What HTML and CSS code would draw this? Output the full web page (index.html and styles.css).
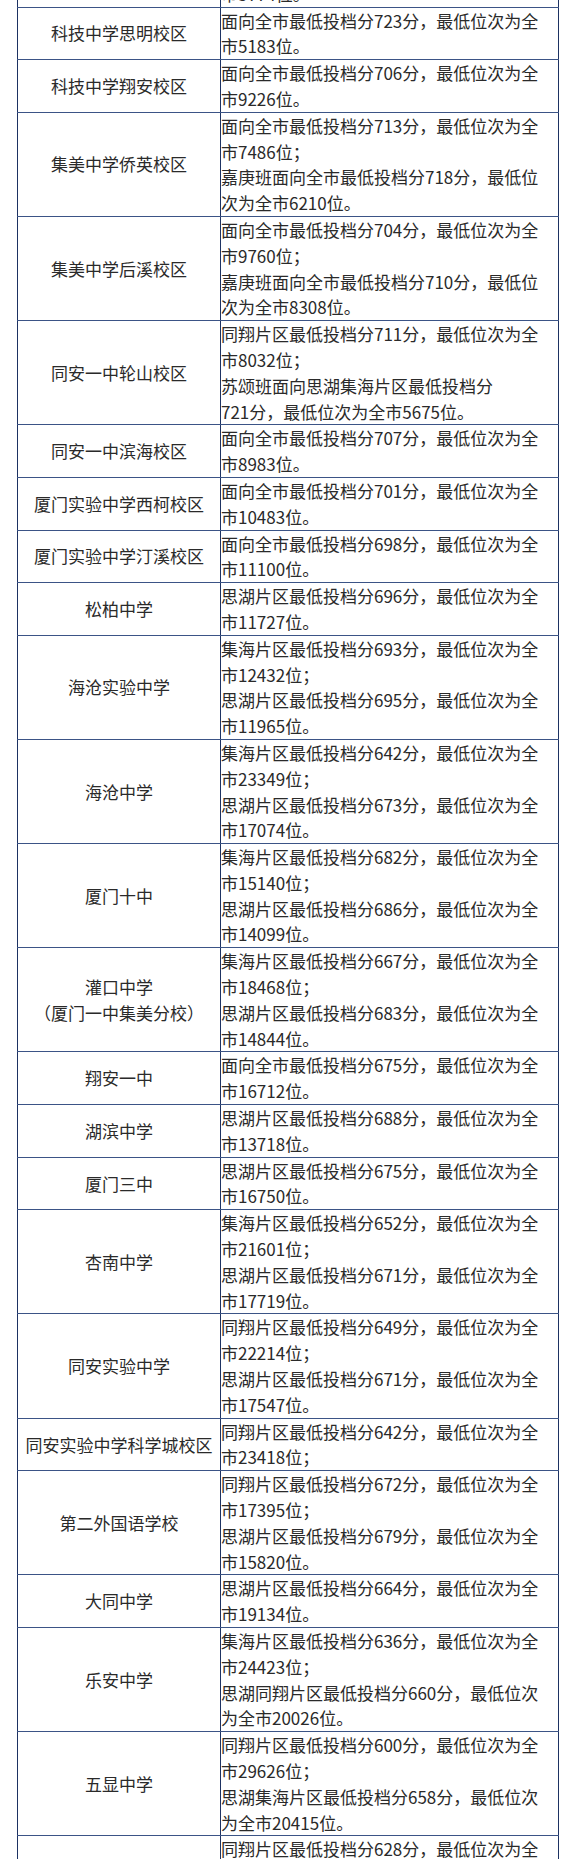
FILE: index.html
```html
<!DOCTYPE html>
<html lang="zh-CN">
<head>
<meta charset="utf-8">
<title>投档分数线</title>
<link rel="stylesheet" href="styles.css">
</head>
<body>
<div class="page">
<table class="score-table">
<colgroup><col class="col-school"><col class="col-info"></colgroup>
<tbody>
<tr><td class="school"></td><td class="info">面向全市最低投档分729分，最低位次为全<br>市3774位。</td></tr>
<tr><td class="school">科技中学思明校区</td><td class="info">面向全市最低投档分723分，最低位次为全<br>市5183位。</td></tr>
<tr><td class="school">科技中学翔安校区</td><td class="info">面向全市最低投档分706分，最低位次为全<br>市9226位。</td></tr>
<tr><td class="school">集美中学侨英校区</td><td class="info">面向全市最低投档分713分，最低位次为全<br>市7486位；<br>嘉庚班面向全市最低投档分718分，最低位<br>次为全市6210位。</td></tr>
<tr><td class="school">集美中学后溪校区</td><td class="info">面向全市最低投档分704分，最低位次为全<br>市9760位；<br>嘉庚班面向全市最低投档分710分，最低位<br>次为全市8308位。</td></tr>
<tr><td class="school">同安一中轮山校区</td><td class="info">同翔片区最低投档分711分，最低位次为全<br>市8032位；<br>苏颂班面向思湖集海片区最低投档分<br>721分，最低位次为全市5675位。</td></tr>
<tr><td class="school">同安一中滨海校区</td><td class="info">面向全市最低投档分707分，最低位次为全<br>市8983位。</td></tr>
<tr><td class="school">厦门实验中学西柯校区</td><td class="info">面向全市最低投档分701分，最低位次为全<br>市10483位。</td></tr>
<tr><td class="school">厦门实验中学汀溪校区</td><td class="info">面向全市最低投档分698分，最低位次为全<br>市11100位。</td></tr>
<tr><td class="school">松柏中学</td><td class="info">思湖片区最低投档分696分，最低位次为全<br>市11727位。</td></tr>
<tr><td class="school">海沧实验中学</td><td class="info">集海片区最低投档分693分，最低位次为全<br>市12432位；<br>思湖片区最低投档分695分，最低位次为全<br>市11965位。</td></tr>
<tr><td class="school">海沧中学</td><td class="info">集海片区最低投档分642分，最低位次为全<br>市23349位；<br>思湖片区最低投档分673分，最低位次为全<br>市17074位。</td></tr>
<tr><td class="school">厦门十中</td><td class="info">集海片区最低投档分682分，最低位次为全<br>市15140位；<br>思湖片区最低投档分686分，最低位次为全<br>市14099位。</td></tr>
<tr><td class="school">灌口中学<br>（厦门一中集美分校）</td><td class="info">集海片区最低投档分667分，最低位次为全<br>市18468位；<br>思湖片区最低投档分683分，最低位次为全<br>市14844位。</td></tr>
<tr><td class="school">翔安一中</td><td class="info">面向全市最低投档分675分，最低位次为全<br>市16712位。</td></tr>
<tr><td class="school">湖滨中学</td><td class="info">思湖片区最低投档分688分，最低位次为全<br>市13718位。</td></tr>
<tr><td class="school">厦门三中</td><td class="info">思湖片区最低投档分675分，最低位次为全<br>市16750位。</td></tr>
<tr><td class="school">杏南中学</td><td class="info">集海片区最低投档分652分，最低位次为全<br>市21601位；<br>思湖片区最低投档分671分，最低位次为全<br>市17719位。</td></tr>
<tr><td class="school">同安实验中学</td><td class="info">同翔片区最低投档分649分，最低位次为全<br>市22214位；<br>思湖片区最低投档分671分，最低位次为全<br>市17547位。</td></tr>
<tr><td class="school">同安实验中学科学城校区</td><td class="info">同翔片区最低投档分642分，最低位次为全<br>市23418位；</td></tr>
<tr><td class="school">第二外国语学校</td><td class="info">同翔片区最低投档分672分，最低位次为全<br>市17395位；<br>思湖片区最低投档分679分，最低位次为全<br>市15820位。</td></tr>
<tr><td class="school">大同中学</td><td class="info">思湖片区最低投档分664分，最低位次为全<br>市19134位。</td></tr>
<tr><td class="school">乐安中学</td><td class="info">集海片区最低投档分636分，最低位次为全<br>市24423位；<br>思湖同翔片区最低投档分660分，最低位次<br>为全市20026位。</td></tr>
<tr><td class="school">五显中学</td><td class="info">同翔片区最低投档分600分，最低位次为全<br>市29626位；<br>思湖集海片区最低投档分658分，最低位次<br>为全市20415位。</td></tr>
<tr><td class="school">新店中学</td><td class="info">同翔片区最低投档分628分，最低位次为全<br>市29000位；<br>思湖集海片区最低投档分650分，最低位次<br>为全市22000位。</td></tr>
</tbody>
</table>
</div>
</body>
</html>
```
FILE: styles.css
```css
html, body {
  margin: 0;
  padding: 0;
  background: #ffffff;
}

.page {
  height: 1859px;
  overflow: hidden;
  padding-left: 17px;
}

.score-table {
  margin-top: -46px;
  width: 541px;
  border-collapse: collapse;
  table-layout: fixed;
  font-family: "Noto Sans CJK SC", "Noto Sans", sans-serif;
  font-size: 17px;
  line-height: 25.8px;
  color: #2a2a2a;
}

.col-school {
  width: 203px;
}

.col-info {
  width: 338px;
}

.score-table td {
  border-top: 1px solid #3b5486;
  border-bottom: 1px solid #3b5486;
  border-left: 1px solid #1d3262;
  border-right: 1px solid #1d3262;
  padding: 0;
  white-space: nowrap;
}

.school {
  text-align: center;
  vertical-align: middle;
}

.info {
  padding: 0 0 0 3px;
  text-align: left;
  vertical-align: top;
}
```
